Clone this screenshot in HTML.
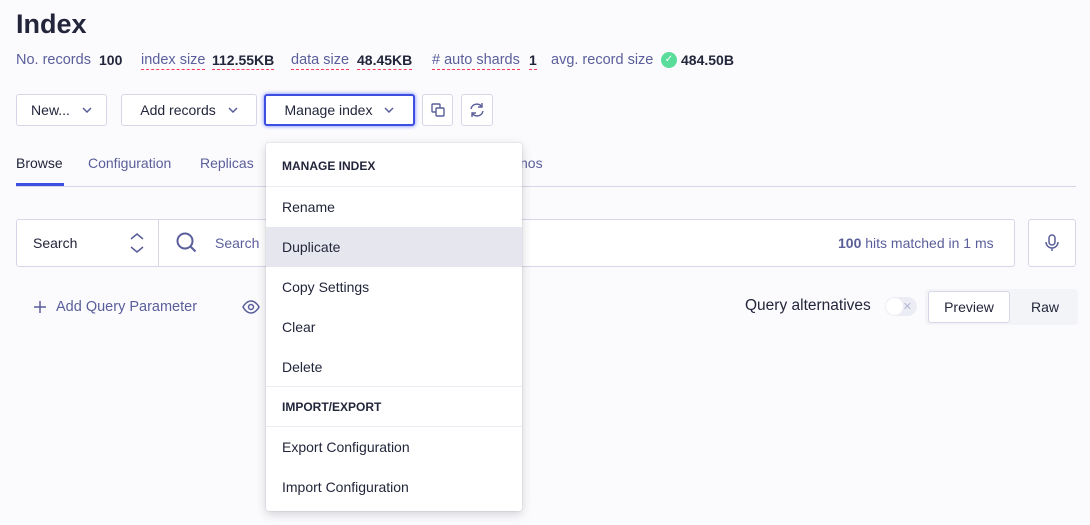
<!DOCTYPE html><html><head><style>
body{margin:0;width:1090px;height:525px;background:#fbfbfd;font-family:"Liberation Sans",sans-serif;position:relative;overflow:hidden;color:#23263b}
.a{position:absolute}
.btn{position:absolute;top:94px;height:32px;background:#fff;border:1px solid #d6d6e7;border-radius:3px;box-sizing:border-box;font-size:14px;color:#23263b;display:flex;align-items:center;justify-content:center;gap:12px}
.lab{color:#5a5e9a;font-size:14px}
.dash{border-bottom:1px dashed #ff3b5c;padding-bottom:1px}
.val{font-weight:bold;font-size:14px;color:#23263b}
.m{position:absolute;top:52px;white-space:nowrap}
.menu{position:absolute;left:266px;top:143px;width:256px;height:368px;background:#fff;border-radius:3px;box-shadow:0 0 0 1px rgba(35,38,59,.05),0 3px 10px rgba(35,38,59,.2)}
.it{height:40px;line-height:40px;padding-left:16px;font-size:14px;color:#23263b}
.hd{height:43px;line-height:46px;padding-left:16px;font-size:12px;font-weight:bold;color:#23263b;border-bottom:1px solid #ececf4}
</style></head><body>
<div class="a" style="left:16px;top:9px;font-size:27px;font-weight:bold">Index</div>
<span class="m lab" style="left:16px;font-size:14.5px">No. records</span><span class="m val" style="left:99px">100</span>
<span class="m lab dash" style="left:141px;font-size:14.5px">index size</span><span class="m val dash" style="left:212px">112.55KB</span>
<span class="m lab dash" style="left:291px;font-size:14.5px">data size</span><span class="m val dash" style="left:357px">48.45KB</span>
<span class="m lab dash" style="left:432px;font-size:14.5px"># auto shards</span><span class="m val dash" style="left:529px">1</span>
<span class="m lab" style="left:551px;font-size:14.5px">avg. record size</span>
<span class="a" style="left:661px;top:52px;width:16px;height:16px;border-radius:50%;background:#5adc9b;color:#fff;font-size:10px;text-align:center;line-height:16px">✓</span>
<span class="m val" style="left:681px">484.50B</span>
<div class="btn" style="left:16px;width:91px">New... <svg width="10" height="6"><path d="M1 1l4 4 4-4" fill="none" stroke="#5a5e9a" stroke-width="1.5"/></svg></div>
<div class="btn" style="left:121px;width:136px">Add records <svg width="10" height="6"><path d="M1 1l4 4 4-4" fill="none" stroke="#5a5e9a" stroke-width="1.5"/></svg></div>
<div class="btn" style="left:264px;width:151px;border:2px solid #3c4fe0;box-shadow:0 0 4px #6d7cff">Manage index <svg width="10" height="6"><path d="M1 1l4 4 4-4" fill="none" stroke="#5a5e9a" stroke-width="1.5"/></svg></div>
<div class="btn" style="left:422px;width:31px"><svg width="14" height="14"><rect x="1" y="1" width="8" height="8" rx="1" fill="none" stroke="#5a5e9a" stroke-width="1.4"/><rect x="5" y="5" width="8" height="8" rx="1" fill="#fff" stroke="#5a5e9a" stroke-width="1.4"/></svg></div>
<div class="btn" style="left:461px;width:32px"><svg width="16" height="16" fill="none" stroke="#5a5e9a" stroke-width="1.4"><path d="M2 7a6 6 0 0 1 11-2M14 9a6 6 0 0 1-11 2M13 1v4h-4M3 15v-4h4"/></svg></div>
<div class="a" style="left:16px;top:155px;font-size:14px">Browse</div>
<div class="a" style="left:16px;top:183px;width:48px;height:3px;background:#3c4fe0"></div>
<div class="a lab" style="left:88px;top:155px">Configuration</div>
<div class="a lab" style="left:200px;top:155px">Replicas</div>
<div class="a lab" style="left:520px;top:155px">nos</div>
<div class="a" style="left:16px;top:186px;width:1060px;height:1px;background:#d6d6e7"></div>
<div class="a" style="left:16px;top:219px;width:999px;height:48px;background:#fff;border:1px solid #d6d6e7;border-radius:3px;box-sizing:border-box"></div>
<div class="a" style="left:158px;top:220px;width:1px;height:46px;background:#d6d6e7"></div>
<div class="a" style="left:33px;top:235px;font-size:14px">Search</div>
<svg class="a" style="left:129px;top:232px" width="16" height="22" fill="none" stroke="#5a5e9a" stroke-width="1.5"><path d="M2 7l6-5 6 5M2 15l6 5 6-5"/></svg>
<svg class="a" style="left:176px;top:232px" width="22" height="22" fill="none" stroke="#5a5e9a" stroke-width="2"><circle cx="9" cy="9" r="7.5"/><path d="M14.5 14.5l5 5"/></svg>
<div class="a lab" style="left:215px;top:235px">Search</div>
<div class="a lab" style="left:838px;top:235px"><b>100</b> hits matched in 1 ms</div>
<div class="a" style="left:1028px;top:219px;width:48px;height:48px;background:#fff;border:1px solid #d6d6e7;border-radius:3px;box-sizing:border-box"></div>
<svg class="a" style="left:1045px;top:234px" width="14" height="18" fill="none" stroke="#5a5e9a" stroke-width="1.5"><rect x="4" y="1" width="6" height="10" rx="3"/><path d="M1 8a6 6 0 0 0 12 0M7 14v3"/></svg>
<svg class="a" style="left:34px;top:301px" width="12" height="12" stroke="#5a5e9a" stroke-width="1.5"><path d="M6 0v12M0 6h12"/></svg>
<div class="a lab" style="left:56px;top:299px;font-size:14.5px">Add Query Parameter</div>
<svg class="a" style="left:242px;top:300px" width="18" height="14" fill="none" stroke="#5a5e9a" stroke-width="1.5"><path d="M1 7s3-6 8-6 8 6 8 6-3 6-8 6-8-6-8-6z"/><circle cx="9" cy="7" r="2.5"/></svg>
<div class="a" style="left:745px;top:297px;font-size:15.5px">Query alternatives</div>
<div class="a" style="left:885px;top:297px;width:32px;height:19px;border-radius:10px;background:#ececf4"><div style="width:17px;height:17px;border-radius:50%;background:#fff;margin:1px"></div><span style="position:absolute;right:5px;top:3px;font-size:11px;color:#b6b7d5">✕</span></div>
<div class="a" style="left:925px;top:289px;width:153px;height:36px;background:#f3f4f8;border-radius:4px"></div>
<div class="a" style="left:928px;top:291px;width:82px;height:32px;background:#fff;border:1px solid #d6d6e7;border-radius:3px;box-sizing:border-box;text-align:center;line-height:30px;font-size:14px">Preview</div>
<div class="a" style="left:1031px;top:299px;font-size:14px">Raw</div>
<div class="menu">
<div class="hd">MANAGE INDEX</div>
<div class="it">Rename</div>
<div class="it" style="background:#e6e6ef">Duplicate</div>
<div class="it">Copy Settings</div>
<div class="it">Clear</div>
<div class="it" style="border-bottom:1px solid #ececf4;height:39px">Delete</div>
<div class="hd" style="height:39px;line-height:40px">IMPORT/EXPORT</div>
<div class="it">Export Configuration</div>
<div class="it">Import Configuration</div>
</div>
</body></html>
